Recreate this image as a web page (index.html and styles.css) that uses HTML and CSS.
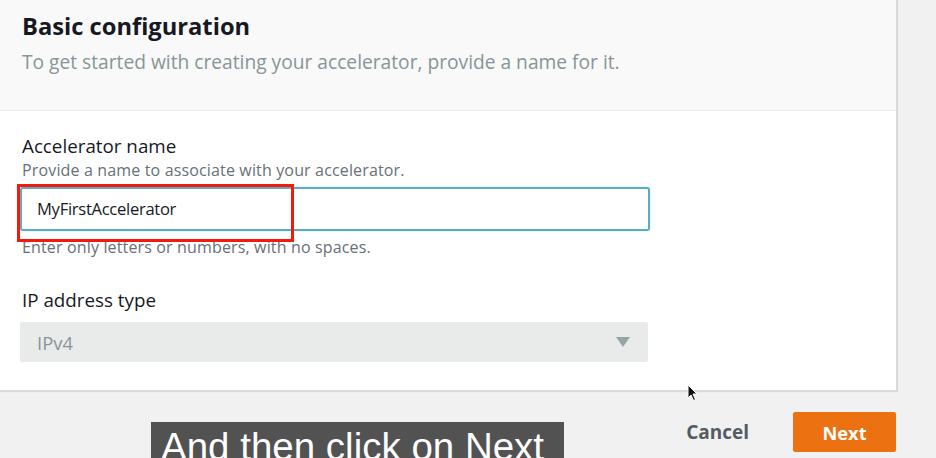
FILE: index.html
```html
<!DOCTYPE html>
<html lang="en">
<head>
<meta charset="utf-8">
<title>Basic configuration</title>
<link rel="stylesheet" href="styles.css">
</head>
<body>
<div class="page">
  <section class="card">
    <header class="card-header">
      <h2 class="title">Basic configuration</h2>
      <p class="subtitle">To get started with creating your accelerator, provide a name for it.</p>
    </header>
    <div class="card-body">
      <div class="field">
        <label class="label">Accelerator name</label>
        <p class="desc">Provide a name to associate with your accelerator.</p>
        <div class="input-wrap">
          <div class="input">MyFirstAccelerator</div>
          <div class="highlight"></div>
        </div>
        <p class="constraint">Enter only letters or numbers, with no spaces.</p>
      </div>
      <div class="field field-ip">
        <label class="label">IP address type</label>
        <div class="select">
          <span class="select-value">IPv4</span>
          <span class="caret"></span>
        </div>
      </div>
    </div>
  </section>
  <footer class="actions">
    <button class="btn btn-link">Cancel</button>
    <button class="btn btn-primary">Next</button>
  </footer>
  <svg class="cursor" width="12" height="18" viewBox="0 0 12 18"><path d="M1 1 L1 14 L4 11 L6.5 16.5 L8.5 15.5 L6 10 L10 10 Z" fill="#111" stroke="#fff" stroke-width="1"/></svg>
  <div class="caption">And then click on Next</div>
</div>
</body>
</html>
```
FILE: styles.css
```css
* { box-sizing: border-box; }
html, body { margin: 0; padding: 0; }
body {
  background: #f1f1f1;
  font-family: "Open Sans", "Noto Sans", sans-serif;
  color: #16191f;
  width: 936px;
  height: 458px;
  overflow: hidden;
}
.page { position: relative; width: 936px; height: 458px; }
.card {
  width: 896px;
  background: #fff;
  box-shadow: 1px 1px 1px 1px #d5dbdb;
}
.card-header {
  height: 111px;
  background: #f9f9f9;
  border-bottom: 1px solid #eaeded;
  padding: 10px 0 0 22px;
}
.title {
  margin: 0;
  font-size: 23.7px;
  line-height: 32px;
  font-weight: 700;
  color: #16191f;
}
.subtitle {
  margin: 8px 0 0;
  font-size: 19.2px;
  line-height: 24px;
  color: #879596;
}
.card-body { padding: 23px 0 28px 20px; }
.label {
  display: block;
  margin: 0 0 0 2px;
  font-size: 18.8px;
  line-height: 24px;
  color: #16191f;
}
.desc, .constraint {
  margin: 2px 0 0 2px;
  font-size: 16px;
  line-height: 20px;
  letter-spacing: 0.15px;
  color: #687078;
}
.input-wrap { position: relative; width: 630px; margin-top: 7px; }
.input {
  height: 44px;
  border: 2px solid #5aabc4;
  border-radius: 3px;
  box-shadow: 0 0 2px #a6e3f2;
  padding-left: 15px;
  font-size: 16.6px;
  font-weight: 500;
  letter-spacing: -0.3px;
  line-height: 40px;
  color: #16191f;
}
.highlight {
  position: absolute;
  left: -3px;
  top: -3px;
  width: 277px;
  height: 58px;
  border: 3px solid #f3190c;
}
.constraint { margin-top: 6px; }
.field-ip { margin-top: 31px; }
.select {
  margin-top: 10px;
  width: 628px;
  height: 40px;
  background: #e9ebeb;
  border-radius: 2px;
  display: flex;
  align-items: center;
  justify-content: space-between;
  padding: 0 18px 0 17px;
}
.select-value { font-size: 18.4px; color: #879596; }
.caret {
  width: 0;
  height: 0;
  border-left: 7px solid transparent;
  border-right: 7px solid transparent;
  border-top: 10px solid #95a5a6;
}
.actions {
  display: flex;
  justify-content: flex-end;
  align-items: center;
  gap: 24px;
  padding: 22px 40px 0 0;
}
.btn {
  font-family: inherit;
  font-size: 19px;
  font-weight: 700;
  height: 40px;
  border-radius: 2px;
  border: 0;
}
.btn-link { background: transparent; color: #545b64; padding: 0 20px; }
.btn-primary { background: #ec7211; color: #fff; width: 103px; font-size: 18.3px; }
.cursor { position: absolute; left: 687px; top: 384px; }
.caption {
  position: absolute;
  left: 151px;
  top: 422px;
  width: 413px;
  height: 50px;
  background: #525252;
  color: #fff;
  font-family: "Liberation Sans", Arial, sans-serif;
  font-size: 38.5px;
  line-height: 38px;
  padding: 6px 0 0 10px;
  white-space: nowrap;
}
```
